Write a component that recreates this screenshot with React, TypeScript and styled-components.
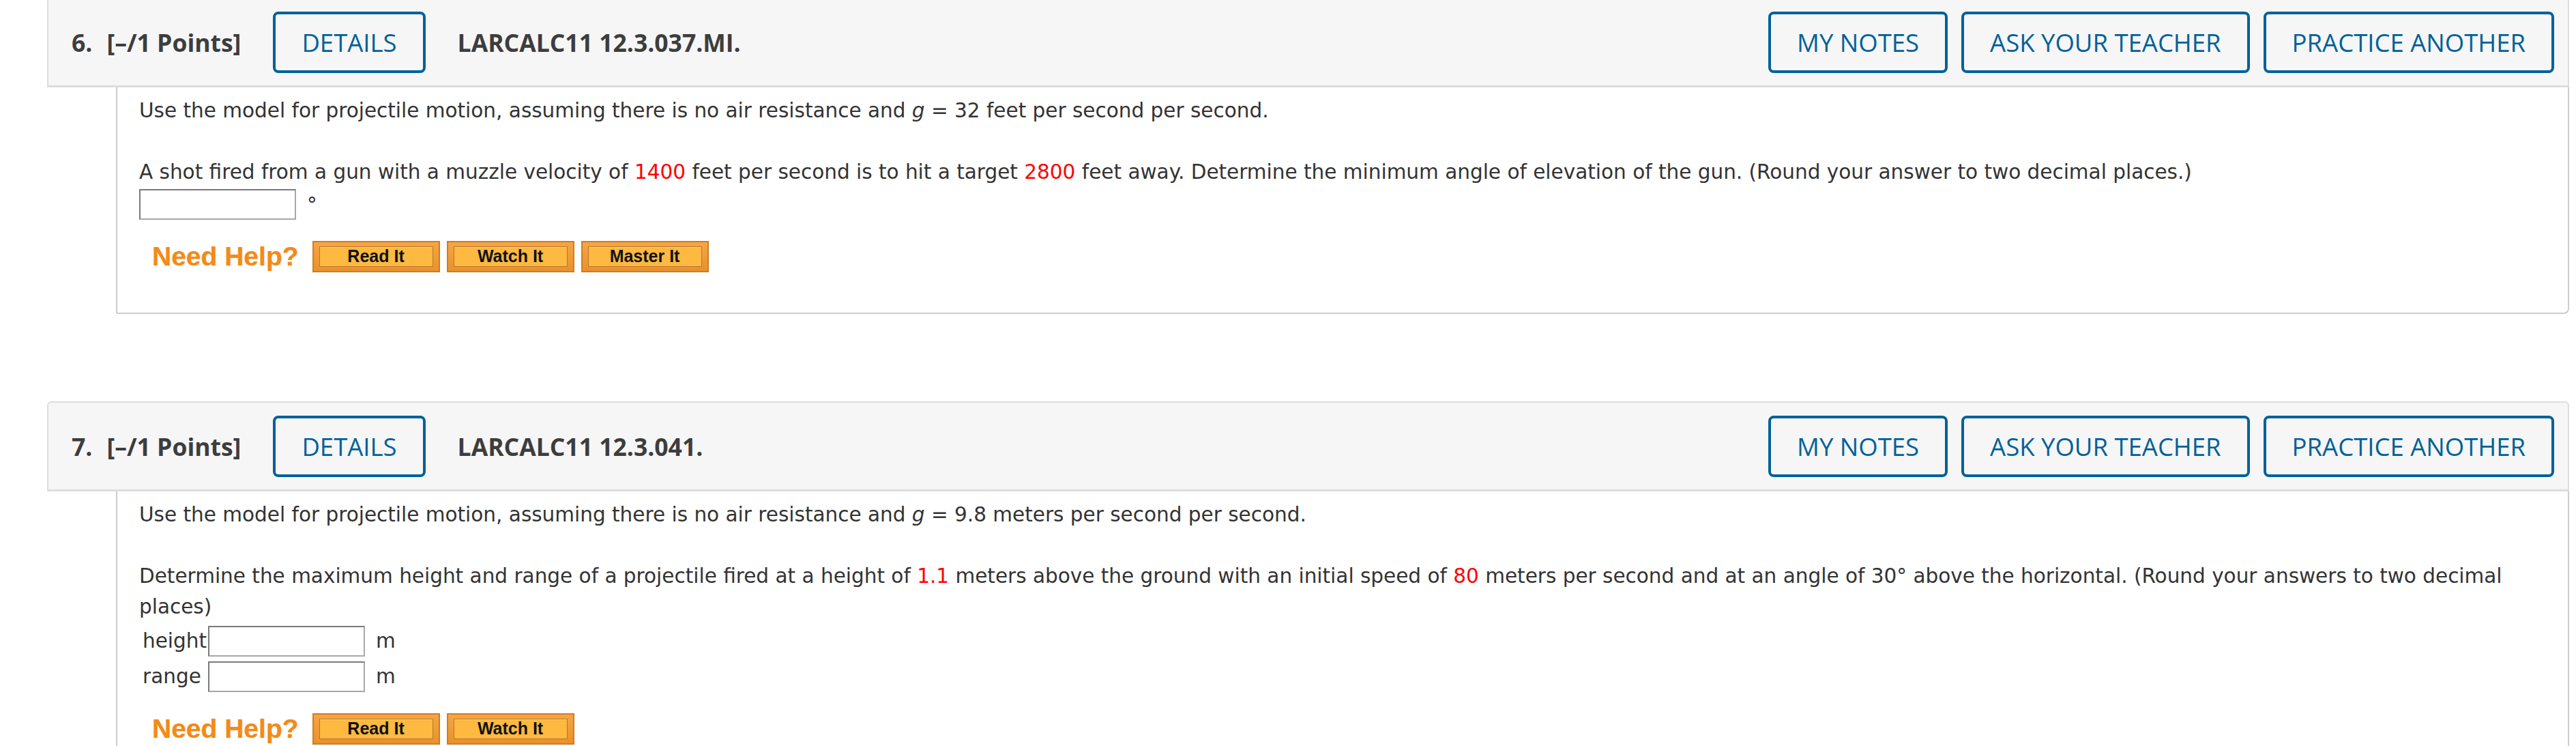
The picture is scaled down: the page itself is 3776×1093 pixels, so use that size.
import React from "react";
import styled, { createGlobalStyle } from "styled-components";

const GlobalStyle = createGlobalStyle`
  html, body { margin: 0; padding: 0; background: #ffffff; }
  body { font-family: "DejaVu Sans", Verdana, sans-serif; }
`;

const Page = styled.div`
  display: flex;
  flex-direction: column;
  gap: 128px;
  margin-top: -4px;
  padding: 0 10px 0 69px;
`;

const Card = styled.section`
  display: flex;
  flex-direction: column;
`;

const Header = styled.header`
  display: flex;
  align-items: center;
  background: #f6f6f6;
  border: 2px solid #dddddd;
  border-bottom-width: 3px;
  border-radius: 6px 6px 0 0;
  padding: 19px 20px 18px 34px;
  font-family: "Open Sans", sans-serif;
  font-size: 35.5px;
  color: #3d3d3d;
`;

const Number = styled.span`
  font-weight: 700;
  margin-right: 21px;
`;

const Points = styled.span`
  font-weight: 700;
  margin-right: 47px;
`;

const Code = styled.span`
  font-weight: 700;
  margin-left: 47px;
`;

const Actions = styled.div`
  display: flex;
  gap: 20px;
  margin-left: auto;
`;

const OutlineButton = styled.button`
  box-sizing: border-box;
  height: 90px;
  padding: 0 38px;
  border: 4px solid #006199;
  border-radius: 8px;
  background: transparent;
  color: #006199;
  font-family: "Open Sans", sans-serif;
  font-size: 36.5px;
  font-weight: 400;
  text-transform: uppercase;
  white-space: nowrap;
  cursor: pointer;
`;

const Body = styled.div`
  margin-left: 101px;
  border: 2px solid #cccccc;
  border-top: none;
  border-radius: 0 0 8px 2px;
  padding: 12px 32px 0 32px;
  font-family: "DejaVu Sans", Verdana, sans-serif;
  font-size: 29.5px;
  line-height: 45px;
  color: #333333;
`;

const Para = styled.p`
  margin: 0 0 45px 0;
`;

const Question = styled.div`
  margin: 0;
`;

const Red = styled.span`
  color: #ff0000;
`;

const Var = styled.i`
  font-style: italic;
`;

const AnswerLine = styled.div`
  margin-top: 2px;
`;

const AnswerInput = styled.input`
  box-sizing: border-box;
  width: 230px;
  height: 45px;
  border: 2px solid #8a8a8a;
  border-color: #7a7a7a #a8a8a8 #a8a8a8 #7a7a7a;
  background: #ffffff;
  vertical-align: baseline;
  margin: 0 16px 0 0;
  padding: 0;
  font-size: 29.5px;
`;

const AnswerTable = styled.table`
  border-collapse: separate;
  border-spacing: 0 7px;
  margin: -2px 0 -7px 0;
`;

const LabelCell = styled.td`
  padding: 0 2px 0 5px;
  color: #333333;
`;

const InputCell = styled.td`
  padding: 0;
`;

const UnitCell = styled.td`
  padding: 0;
  vertical-align: middle;
`;

const HelpRow = styled.div<{ $bottom: number }>`
  display: flex;
  align-items: center;
  gap: 10px;
  padding: 30px 0 ${(p) => p.$bottom}px 19px;
`;

const NeedHelp = styled.span`
  font-family: "Liberation Sans", Arial, sans-serif;
  font-weight: 700;
  font-size: 39px;
  line-height: 1;
  color: #f38a1a;
  text-shadow: 0 0 1px rgba(243, 138, 26, 0.6);
  margin-right: 10px;
`;

const HelpButton = styled.button`
  box-sizing: border-box;
  width: 187px;
  height: 46px;
  padding: 6px 8px;
  border: 2px solid #cf7d20;
  background: linear-gradient(#f5a544, #ea912c);
  cursor: pointer;
  display: flex;
`;

const HelpInner = styled.span`
  flex: 1;
  display: flex;
  align-items: center;
  justify-content: center;
  border: 1px solid #b8762a;
  background: #fdb940;
  box-shadow: inset 0 1px 0 #ffd27a;
  font-family: "Liberation Sans", Arial, sans-serif;
  font-weight: 700;
  font-size: 25px;
  line-height: 1;
  color: #111111;
`;

function Help({ labels, bottom }: { labels: string[]; bottom: number }) {
  return (
    <HelpRow $bottom={bottom}>
      <NeedHelp>Need Help?</NeedHelp>
      {labels.map((l) => (
        <HelpButton key={l}>
          <HelpInner>{l}</HelpInner>
        </HelpButton>
      ))}
    </HelpRow>
  );
}

function QHeader({ num, code }: { num: string; code: string }) {
  return (
    <Header>
      <Number>{num}.</Number>
      <Points>[–/1 Points]</Points>
      <OutlineButton>Details</OutlineButton>
      <Code>{code}</Code>
      <Actions>
        <OutlineButton>My Notes</OutlineButton>
        <OutlineButton>Ask Your Teacher</OutlineButton>
        <OutlineButton>Practice Another</OutlineButton>
      </Actions>
    </Header>
  );
}

export default function App() {
  return (
    <>
      <GlobalStyle />
      <Page>
        <Card>
          <QHeader num="6" code="LARCALC11 12.3.037.MI." />
          <Body>
            <Para>
              Use the model for projectile motion, assuming there is no air resistance and <Var>g</Var> = 32 feet per second per second.
            </Para>
            <Question>
              A shot fired from a gun with a muzzle velocity of <Red>1400</Red> feet per second is to hit a target <Red>2800</Red> feet away. Determine the minimum angle of elevation of the gun. (Round your answer to two decimal places.)
            </Question>
            <AnswerLine>
              <AnswerInput type="text" aria-label="angle" />°
            </AnswerLine>
            <Help labels={["Read It", "Watch It", "Master It"]} bottom={59} />
          </Body>
        </Card>
        <Card>
          <QHeader num="7" code="LARCALC11 12.3.041." />
          <Body>
            <Para>
              Use the model for projectile motion, assuming there is no air resistance and <Var>g</Var> = 9.8 meters per second per second.
            </Para>
            <Question>
              Determine the maximum height and range of a projectile fired at a height of <Red>1.1</Red> meters above the ground with an initial speed of <Red>80</Red> meters per second and at an angle of 30° above the horizontal. (Round your answers to two decimal places)
            </Question>
            <AnswerTable>
              <tbody>
                <tr>
                  <LabelCell>height</LabelCell>
                  <InputCell>
                    <AnswerInput type="text" aria-label="height" />
                  </InputCell>
                  <UnitCell>m</UnitCell>
                </tr>
                <tr>
                  <LabelCell>range</LabelCell>
                  <InputCell>
                    <AnswerInput type="text" aria-label="range" />
                  </InputCell>
                  <UnitCell>m</UnitCell>
                </tr>
              </tbody>
            </AnswerTable>
            <Help labels={["Read It", "Watch It"]} bottom={59} />
          </Body>
        </Card>
      </Page>
    </>
  );
}
